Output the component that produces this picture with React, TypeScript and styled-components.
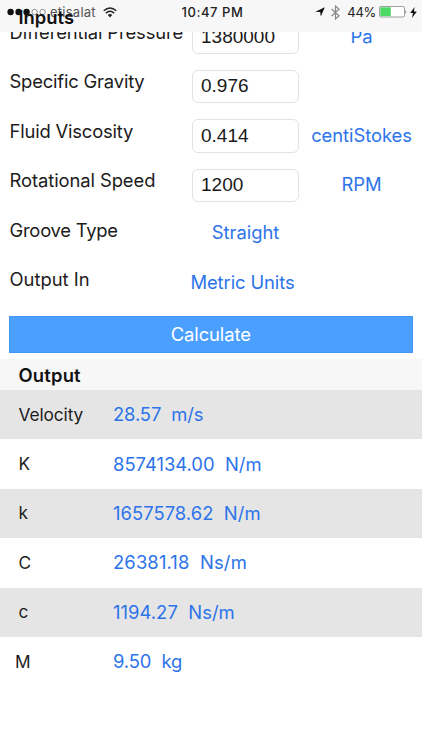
import React from 'react';
import styled, { createGlobalStyle } from 'styled-components';

const GlobalStyle = createGlobalStyle`
  * { box-sizing: border-box; }
  body { margin: 0; background: #fff; font-family: Inter, "Liberation Sans", sans-serif; color: #1c1c1c; }
`;

const Screen = styled.main`
  position: relative;
  display: flex;
  flex-direction: column;
  width: 422px;
  height: 750px;
  overflow: hidden;
  background: #fff;
`;

const TopBar = styled.header`
  position: relative;
  flex: none;
  height: 31.5px;
  background: #f7f7f7;
`;

const StatusBar = styled.div`
  display: grid;
  grid-template-columns: 1fr auto 1fr;
  align-items: center;
  height: 24px;
  padding: 0 5px 0 7px;
  font-size: 13px;
  color: #222;
`;

const StatusGroup = styled.div<{ $end?: boolean }>`
  display: flex;
  align-items: center;
  justify-content: ${p => (p.$end ? 'flex-end' : 'flex-start')};
`;

const Carrier = styled.span`
  margin: 0 7px 0 4px;
  letter-spacing: 0.25px;
  color: #555;
`;

const Clock = styled.span`
  font-weight: 500;
  font-size: 13px;
  letter-spacing: 0.55px;
  margin-left: 1px;
`;

const Percent = styled.span`
  margin: 0 3px 0 7px;
  letter-spacing: -0.3px;
`;

const InputsTitle = styled.div`
  position: absolute;
  left: 18.5px;
  top: 5px;
  font-size: 18.4px;
  line-height: 24px;
  font-weight: 600;
  letter-spacing: 0;
  color: #111;
`;

const Form = styled.section`
  flex: none;
  height: 284px;
  overflow: hidden;
`;

const FormRows = styled.div`
  margin-top: -21.5px;
`;

const FormRow = styled.div<{ $wide?: boolean }>`
  display: grid;
  grid-template-columns: ${p => (p.$wide ? '182.5px 107px' : '182.5px 107px 125px')};
  height: 49.4px;
  padding-left: 9.5px;
`;

const Label = styled.label<{ $spacing: number }>`
  padding-top: 9px;
  font-size: 18.4px;
  line-height: 26px;
  white-space: nowrap;
  letter-spacing: ${p => p.$spacing}px;
`;

const Field = styled.input`
  width: 107px;
  height: 33.5px;
  margin: 10.5px 0 0;
  padding: 0 8px 1px;
  border: 1px solid #e2e2e2;
  border-radius: 6px;
  background: #fff;
  outline: none;
  font: 19px "Liberation Sans", sans-serif;
  color: #1a1a1a;
`;

const Choice = styled.button<{ $spacing: number; $lift?: number; $shift?: number }>`
  justify-self: center;
  height: 26px;
  margin: ${p => 13 - (p.$lift ?? 0)}px ${p => p.$shift ?? 0}px 0 0;
  padding: 0;
  border: 0;
  background: none;
  font: 18.4px/26px Inter, sans-serif;
  letter-spacing: ${p => p.$spacing}px;
  white-space: nowrap;
  color: #2d74ea;
`;

const Calculate = styled.button`
  flex: none;
  height: 37px;
  margin: 0 9.5px 0 9px;
  padding: 0 0 1px;
  border: 1px solid #4498f3;
  background: #4ba0ff;
  color: #fff;
  font: 18.4px Inter, sans-serif;
  letter-spacing: -0.1px;
`;

const SectionTitle = styled.h2`
  flex: none;
  height: 31.5px;
  margin: 6px 0 0;
  padding-left: 18.5px;
  background: #f7f7f7;
  font-size: 18.4px;
  line-height: 32px;
  font-weight: 600;
  letter-spacing: 0.2px;
  color: #111;
`;

const Results = styled.dl`
  margin: 0;
`;

const ResultRow = styled.div<{ $shaded: boolean; $indent: number }>`
  display: grid;
  grid-template-columns: ${p => 113 - p.$indent}px 1fr;
  align-items: center;
  height: 49.4px;
  padding: 0 0 1px ${p => p.$indent}px;
  background: ${p => (p.$shaded ? '#e5e5e5' : '#fff')};
`;

const Term = styled.dt`
  font-size: 17.3px;
  letter-spacing: -0.1px;
`;

const Value = styled.dd<{ $spacing: number }>`
  margin: 0;
  font-size: 18.4px;
  letter-spacing: ${p => p.$spacing}px;
  white-space: pre;
  color: #2d74ea;
`;

const inputs = [
  { label: 'Differential Pressure', ls: -0.12, value: '1380000', unit: 'Pa', us: 0 },
  { label: 'Specific Gravity', ls: -0.18, value: '0.976' },
  { label: 'Fluid Viscosity', ls: -0.18, value: '0.414', unit: 'centiStokes', us: -0.06 },
  { label: 'Rotational Speed', ls: -0.08, value: '1200', unit: 'RPM', us: 0 },
];

const choices = [
  { label: 'Groove Type', ls: -0.24, value: 'Straight', us: 0, lift: 1.5, shift: 0 },
  { label: 'Output In', ls: 0, value: 'Metric Units', us: -0.1, lift: 1, shift: 6 },
];

const results = [
  { name: 'Velocity', value: '28.57  m/s', ls: -0.12, indent: 18.5 },
  { name: 'K', value: '8574134.00  N/m', ls: 0, indent: 18.5 },
  { name: 'k', value: '1657578.62  N/m', ls: 0.04, indent: 18.5 },
  { name: 'C', value: '26381.18  Ns/m', ls: 0.13, indent: 18.5 },
  { name: 'c', value: '1194.27  Ns/m', ls: 0.04, indent: 18.5 },
  { name: 'M', value: '9.50  kg', ls: -0.1, indent: 15 },
];

const Signal = () => (
  <svg width="39" height="8" viewBox="0 0 39 8">
    {[0, 1, 2, 3, 4].map(i => (
      <circle key={i} cx={3.6 + i * 8} cy="4" r={i < 3 ? 3.2 : 2.7} fill={i < 3 ? '#111' : 'none'} stroke={i < 3 ? 'none' : '#777'} strokeWidth="0.8" />
    ))}
  </svg>
);

const Wifi = () => (
  <svg width="14" height="11" viewBox="0 0 14 11" fill="none" stroke="#222" strokeWidth="1.4">
    <path d="M.7 3.8Q7-2 13.3 3.8M2.8 6.2Q7 2.4 11.2 6.2" />
    <path d="M4.8 8Q7 6 9.2 8L7 10.4Z" fill="#222" stroke="none" />
  </svg>
);

const LocationArrow = () => (
  <svg width="10" height="10" viewBox="0 0 10 10"><path d="M9.8.3 5.8 9.5 5.2 5 .3 4.7Z" fill="#111" /></svg>
);

const Bluetooth = () => (
  <svg width="9" height="15" viewBox="0 0 9 15" fill="none" stroke="#888" strokeWidth="1.2">
    <path d="M.6 4 8 10.8 4.5 14V1L8 4.2.6 11" />
  </svg>
);

const Battery = () => (
  <svg width="31" height="12" viewBox="0 0 31 12">
    <rect x=".5" y=".5" width="25" height="10.5" rx="1.5" fill="#fff" stroke="#888" strokeWidth=".8" />
    <rect x="1.3" y="1.3" width="10.5" height="8.9" fill="#4cd964" />
    <path d="M26.5 4q1.8 1.8 0 3.8Z" fill="#555" />
  </svg>
);

const Bolt = () => (
  <svg width="7" height="11" viewBox="0 0 7 11"><path d="M4.6 0 .2 6H3L2 11 6.8 4.6H3.9Z" fill="#111" /></svg>
);

const IconGap = styled.span`
  width: 6px;
`;

export default function App() {
  return (
    <Screen>
      <GlobalStyle />
      <TopBar>
        <StatusBar>
          <StatusGroup>
            <Signal />
            <Carrier>etisalat</Carrier>
            <Wifi />
          </StatusGroup>
          <Clock>10:47 PM</Clock>
          <StatusGroup $end>
            <LocationArrow />
            <IconGap />
            <Bluetooth />
            <Percent>44%</Percent>
            <Battery />
            <Bolt />
          </StatusGroup>
        </StatusBar>
        <InputsTitle>Inputs</InputsTitle>
      </TopBar>
      <Form>
        <FormRows>
          {inputs.map(r => (
            <FormRow key={r.label}>
              <Label $spacing={r.ls}>{r.label}</Label>
              <Field defaultValue={r.value} />
              {r.unit && <Choice $spacing={r.us ?? 0}>{r.unit}</Choice>}
            </FormRow>
          ))}
          {choices.map(r => (
            <FormRow key={r.label} $wide>
              <Label $spacing={r.ls}>{r.label}</Label>
              <Choice $spacing={r.us} $lift={r.lift} $shift={r.shift}>{r.value}</Choice>
            </FormRow>
          ))}
        </FormRows>
      </Form>
      <Calculate>Calculate</Calculate>
      <SectionTitle>Output</SectionTitle>
      <Results>
        {results.map((r, i) => (
          <ResultRow key={r.name} $shaded={i % 2 === 0} $indent={r.indent}>
            <Term>{r.name}</Term>
            <Value $spacing={r.ls}>{r.value}</Value>
          </ResultRow>
        ))}
      </Results>
    </Screen>
  );
}
